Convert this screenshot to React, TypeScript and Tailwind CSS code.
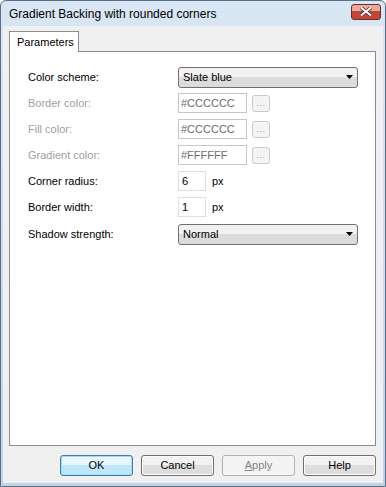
import React from 'react'

const dlg = { fontFamily: '"Liberation Sans", Arial, sans-serif' }

function Combo({ value }: { value: string }) {
  return (
    <div className="w-[180px] h-[21px] flex items-center justify-between rounded-[3px] border border-[#707070] bg-gradient-to-b from-[#f2f2f2] from-50% to-[#dcdcdc] to-50% pl-[4px] pr-[4px]">
      <span className="text-[11px] text-black">{value}</span>
      <svg width="7" height="4" viewBox="0 0 7 4">
        <path d="M0 0h7L3.5 4z" fill="#000" />
      </svg>
    </div>
  )
}

function ColorRow({ label, value }: { label: string; value: string }) {
  return (
    <div className="flex items-center h-[20px]">
      <span className="w-[150px] text-[11px] text-[#a0a0a0]">{label}</span>
      <div className="w-[69px] h-[20px] border border-[#c4c6cc] bg-white flex items-center pl-[2px] text-[11px] text-[#6d6d6d]">
        {value}
      </div>
      <div className="ml-[5px] w-[18px] h-[17px] rounded-[3px] border border-[#c8cacd] bg-[#f4f4f4] flex items-end justify-center pb-[3px]">
        <span className="text-[9px] leading-none text-[#a0a0a0] tracking-[0.5px]">...</span>
      </div>
    </div>
  )
}

function NumRow({ label, value }: { label: string; value: string }) {
  return (
    <div className="flex items-center h-[20px]">
      <span className="w-[150px] text-[11px] text-black">{label}</span>
      <div className="w-[28px] h-[20px] border border-[#dbdfe6] bg-white flex items-center pl-[3px] text-[11px] text-black">
        {value}
      </div>
      <span className="ml-[6px] text-[11px] text-black">px</span>
    </div>
  )
}

function Btn({ label, kind }: { label: React.ReactNode; kind?: 'default' | 'disabled' }) {
  if (kind === 'default') {
    return (
      <div className="w-[73px] h-[21px] rounded-[3px] border border-[#3c7fb1] bg-gradient-to-b from-[#eaf6fd] from-50% to-[#bee6fd] to-50% shadow-[inset_0_0_0_1px_#a7d9f5] flex items-center justify-center text-[11px] text-black">
        {label}
      </div>
    )
  }
  if (kind === 'disabled') {
    return (
      <div className="w-[73px] h-[21px] rounded-[3px] border border-[#adb2b5] bg-[#f4f4f4] flex items-center justify-center text-[11px] text-[#838383]">
        {label}
      </div>
    )
  }
  return (
    <div className="w-[73px] h-[21px] rounded-[3px] border border-[#707070] bg-gradient-to-b from-[#f2f2f2] from-50% to-[#dddddd] to-50% shadow-[inset_0_0_0_1px_#fcfcfc] flex items-center justify-center text-[11px] text-black">
      {label}
    </div>
  )
}

export default function App() {
  return (
    <div style={dlg} className="w-[386px] h-[487px] flex flex-col rounded-t-[6px] border border-[#5b6f86] bg-gradient-to-b from-[#d9e6f4] to-[#bfd4eb] px-[2px] pb-[3px]">
      {/* title bar */}
      <div className="h-[25px] flex items-center justify-between pl-[6px] pr-[2px]">
        <span className="text-[12px] text-black">Gradient Backing with rounded corners</span>
        <div className="w-[30px] h-[16px] mb-[4px] rounded-[3px] border border-[#6d2f2a] bg-gradient-to-b from-[#e9a99d] from-45% to-[#c0463a] to-45% flex items-center justify-center">
          <svg width="12" height="9" viewBox="0 0 12 9">
            <path d="M1 0.5L11 8.5M11 0.5L1 8.5" stroke="#5a2a24" strokeWidth="3.4" />
            <path d="M1 0.5L11 8.5M11 0.5L1 8.5" stroke="#fff" strokeWidth="2" />
          </svg>
        </div>
      </div>

      {/* client area */}
      <div className="flex-1 flex flex-col bg-[#f0f0f0] pl-[6px] pt-[5px] pb-[7px]">
        <div className="relative z-10 -mb-px w-[70px] h-[21px] border-l border-t border-r border-[#898c95] bg-white flex items-center pl-[7px] text-[11px] text-black">
          Parameters
        </div>
        <div className="w-[367px] h-[395px] border border-[#898c95] bg-white pl-[18px] pt-[15px] flex flex-col gap-[6px]">
          <div className="flex items-center h-[20px]">
            <span className="w-[150px] text-[11px] text-black">Color scheme:</span>
            <Combo value="Slate blue" />
          </div>
          <ColorRow label="Border color:" value="#CCCCCC" />
          <ColorRow label="Fill color:" value="#CCCCCC" />
          <ColorRow label="Gradient color:" value="#FFFFFF" />
          <NumRow label="Corner radius:" value="6" />
          <NumRow label="Border width:" value="1" />
          <div className="flex items-center h-[20px] mt-[1px]">
            <span className="w-[150px] text-[11px] text-black">Shadow strength:</span>
            <Combo value="Normal" />
          </div>
        </div>

        <div className="flex-1" />
        <div className="flex justify-end gap-[8px] pr-[7px]">
          <Btn label="OK" kind="default" />
          <Btn label="Cancel" />
          <Btn label={<><span className="underline">A</span>pply</>} kind="disabled" />
          <Btn label="Help" />
        </div>
      </div>
    </div>
  )
}
